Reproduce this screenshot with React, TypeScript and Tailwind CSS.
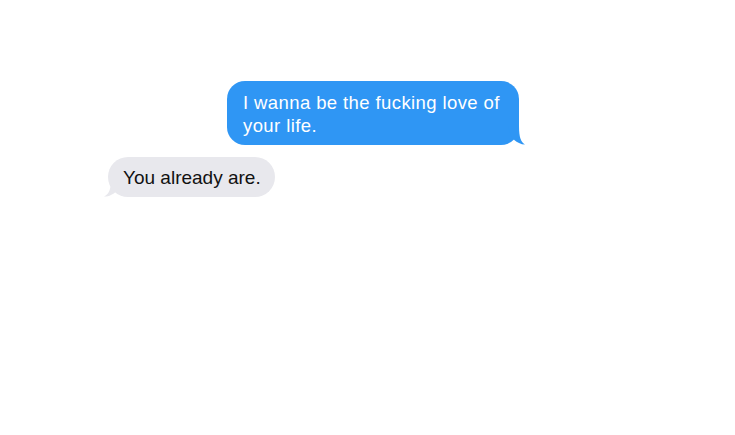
import React from 'react';

function BlueTail() {
  return (
    <svg className="absolute -right-[9px] bottom-[-1px]" width="20" height="20" viewBox="0 0 20 20">
      <path d="M0 0 C2 8 4 14 11 17 C13 18 15 18.5 17 18.5 C13 16 11 12 11 0 Z" fill="#2f96f4" />
    </svg>
  );
}

function GrayTail() {
  return (
    <svg className="absolute -left-[6px] bottom-[-1px]" width="20" height="20" viewBox="0 0 20 20">
      <path d="M20 0 C18 8 16 14 9 17 C7 18 5 18.5 2 18.5 C7 16 9 12 9 0 Z" fill="#e8e8ed" />
    </svg>
  );
}

export default function App() {
  return (
    <div className="w-[735px] h-[435px] bg-white overflow-hidden" style={{ fontFamily: '"Liberation Sans", Arial, sans-serif' }}>
      <div className="flex flex-col items-start pl-[108px] pt-[81px]">
        <div className="relative ml-[119px] w-[292px] h-[64px] rounded-[18px] bg-[#2f96f4] pl-[16px] pt-[10px] text-white text-[18.5px] leading-[23px] tracking-[0.4px]">
          I wanna be the fucking love of
          <br />
          your life.
          <BlueTail />
        </div>
        <div className="relative mt-[12px] w-[167px] h-[40px] rounded-[20px] bg-[#e8e8ed] pl-[15px] pt-[10px] text-[#111] text-[19px] leading-[22px]">
          You already are.
          <GrayTail />
        </div>
      </div>
    </div>
  );
}
